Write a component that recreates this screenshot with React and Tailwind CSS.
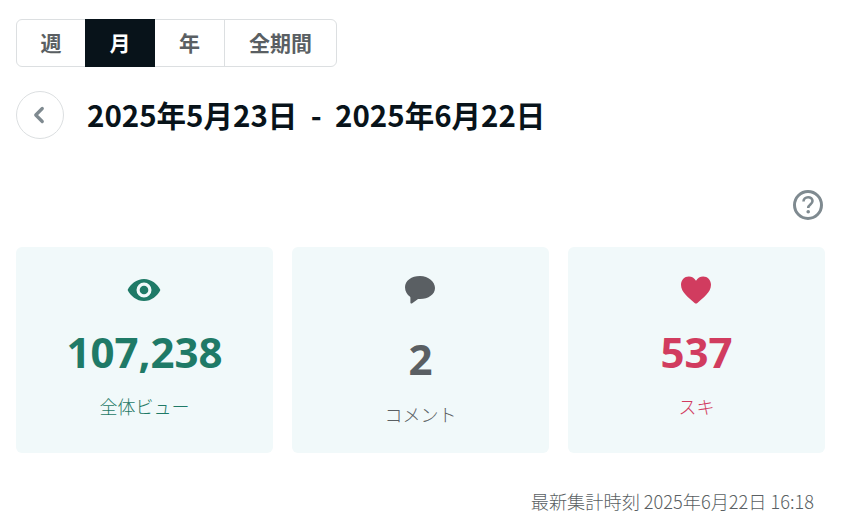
import { ChevronLeft } from 'lucide-react';

const font = { jp: 'font-["Noto_Sans_CJK_JP",sans-serif]' };

const EyeIcon = () => (
  <svg width="34" height="24" viewBox="0 0 34 24" className="text-[#1f7a67] -ml-[2px]">
    <path fill="currentColor" fillRule="evenodd" d="M17 1C9.5 1 3.5 6 .6 12 3.500 18 9.500 23 17 23s13.500-5 16.400-11C30.500 6 24.500 1 17 1Zm0 3.500a7.500 7.500 0 1 1 0 15 7.500 7.500 0 0 1 0-15Z" />
    <circle cx="17" cy="12" r="4.300" fill="currentColor" />
  </svg>
);

const CommentIcon = () => (
  <svg width="32" height="30" viewBox="0 0 32 30" className="text-[#5a5f63] -ml-[2px]">
    <path fill="currentColor" d="M16 1C7.500 1 1 5.800 1 12.300c0 4.200 2.300 7.500 4.800 9.300.4.300.6.700.6 1.100v4.800c0 1 1 1.400 1.800.8l5.200-3.900c.4-.3.800-.4 1.200-.4H16c8.500 0 15-4.700 15-11S24.500 1 16 1Z" />
  </svg>
);

const HeartIcon = () => (
  <svg width="32" height="30" viewBox="0 0 32 30" className="text-[#d13c5f] -ml-[2px]">
    <path fill="currentColor" d="M16 28.500c-.5 0-1-.2-1.400-.6C9 23 1 17.500 1 9.800 1 5 4.600 1.500 8.800 1.500c3 0 5.600 1.500 7.200 4.300 1.600-2.800 4.200-4.300 7.200-4.300C27.400 1.500 31 5 31 9.800c0 7.700-8 13.200-13.600 18.100-.4.400-.9.600-1.400.6Z" />
  </svg>
);

const HelpIcon = () => (
  <svg width="32" height="32" viewBox="0 0 32 32" fill="none" className="text-[#7f8a90]">
    <circle cx="16" cy="16" r="13.500" stroke="currentColor" strokeWidth="3" />
    <path d="M11.500 12.500c0-2.600 2-4.300 4.600-4.300 2.500 0 4.400 1.600 4.400 3.900 0 3.400-4.300 3.500-4.300 6.900" stroke="currentColor" strokeWidth="2.600" />
    <circle cx="16.200" cy="22.800" r="1.800" fill="currentColor" />
  </svg>
);

const tabs = [
  { label: '週', w: 'w-[68px]' },
  { label: '月', w: 'w-[70px]', active: true },
  { label: '年', w: 'w-[69px]' },
  { label: '全期間', w: 'w-[112px]' },
];

const cards = [
  { icon: <EyeIcon />, value: '107,238', label: '全体ビュー', color: 'text-[#1f7a67]', mt: 'mt-[17px]', labelMt: 'mt-[11px]' },
  { icon: <CommentIcon />, value: '2', label: 'コメント', color: 'text-[#5a5f63]', mt: 'mt-[24px]', labelMt: 'mt-[12px]' },
  { icon: <HeartIcon />, value: '537', label: 'スキ', color: 'text-[#d13c5f]', mt: 'mt-[17px]', labelMt: 'mt-[11px]' },
];

export default function App() {
  return (
    <div className={`w-[860px] h-[518px] overflow-hidden bg-white pl-4 pt-[19px] ${font.jp}`}>
      <div className="flex w-fit h-12 rounded-md border border-[#dcdfe1]">
        {tabs.map((t) => (
          <div
            key={t.label}
            className={`flex items-center justify-center text-[21px] font-bold ${t.w} ${
              t.active ? 'bg-[#08131a] text-white -my-px' : 'text-[#5a5f63]'
            } ${t.label === '全期間' ? 'border-l border-[#dcdfe1]' : ''}`}
          >
            {t.label}
          </div>
        ))}
      </div>

      <div className="flex items-center mt-6">
        <div className="flex items-center justify-center w-12 h-12 rounded-full border border-[#dcdfe1] text-[#7f8a90]">
          <ChevronLeft size={26} strokeWidth={3} className="-ml-[2px]" />
        </div>
        <h1 className="ml-[23px] pb-[2px] text-[29.5px] font-bold text-[#08131a] whitespace-pre">2025年5月23日  -  2025年6月22日</h1>
      </div>

      <div className="flex justify-end w-[809px] mt-[50px] pr-[1px]">
        <HelpIcon />
      </div>

      <div className="grid grid-cols-3 gap-[19px] w-[809px] mt-[26px]">
        {cards.map((c) => (
          <div key={c.label} className={`flex flex-col items-center h-[206px] rounded-md bg-[#f1f9fa] pt-7 ${c.color}`}>
            <div className="h-[30px] flex items-center">{c.icon}</div>
            <div className={`${c.mt} text-[42px] leading-[60px] font-bold font-["Open_Sans",sans-serif]`}>{c.value}</div>
            <div className={`${c.labelMt} text-[18px] leading-[26px] font-light`}>{c.label}</div>
          </div>
        ))}
      </div>

      <div className="w-[798px] mt-[36px] text-right text-[18.2px] leading-6 font-light text-[#5a5f63]">最新集計時刻 2025年6月22日 16:18</div>
    </div>
  );
}
